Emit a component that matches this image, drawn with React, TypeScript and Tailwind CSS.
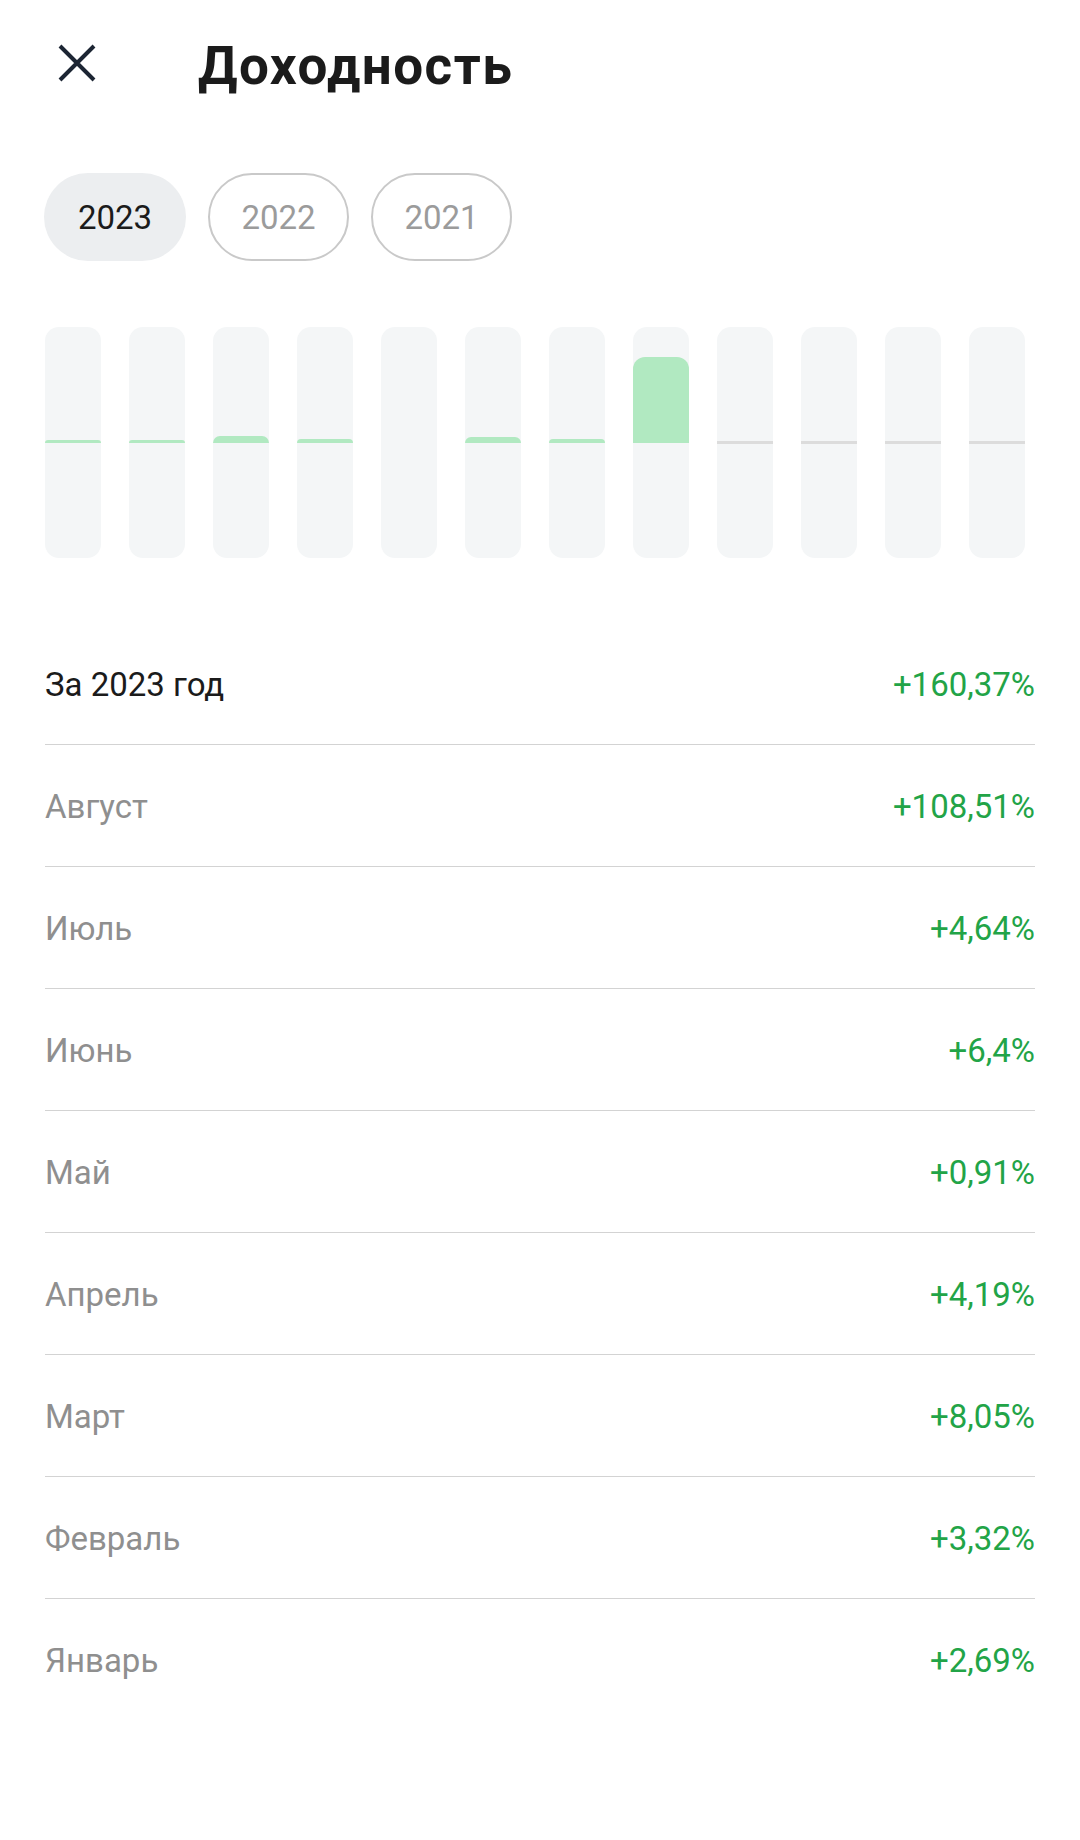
import React from "react";

interface MonthRow {
  label: string;
  value: string;
}

const years = ["2023", "2022", "2021"];

// returns in % for each month of the selected year, null = no data yet
const monthly: (number | null)[] = [2.69, 3.32, 8.05, 4.19, 0.91, 6.4, 4.64, 108.51, null, null, null, null];

const rows: MonthRow[] = [
  { label: "Август", value: "+108,51%" },
  { label: "Июль", value: "+4,64%" },
  { label: "Июнь", value: "+6,4%" },
  { label: "Май", value: "+0,91%" },
  { label: "Апрель", value: "+4,19%" },
  { label: "Март", value: "+8,05%" },
  { label: "Февраль", value: "+3,32%" },
  { label: "Январь", value: "+2,69%" },
];

const CloseIcon = () => (
  <svg width="38" height="38" viewBox="0 0 38 38" fill="none">
    <path d="M2 2L36 36M36 2L2 36" stroke="#1c2533" strokeWidth="4" />
  </svg>
);

const Bar: React.FC<{ value: number | null }> = ({ value }) => {
  const px = value === null ? 0 : value * 0.79;
  return (
    <div className="flex h-[231px] w-[56px] flex-col overflow-hidden rounded-[14px] bg-[#f4f6f7]">
      <div className="flex flex-1 flex-col justify-end">
        {value !== null && px >= 1.5 && (
          <div className="w-full rounded-t-[12px] bg-[#b1e9c1]" style={{ height: `${px}px` }} />
        )}
      </div>
      <div className="flex flex-1 flex-col">
        {value === null && <div className="-mt-[2px] h-[3px] w-full bg-[#dcdcdc]" />}
      </div>
    </div>
  );
};

const App: React.FC = () => {
  return (
    <div className="min-h-[1840px] w-[1080px] bg-white font-['Roboto',sans-serif]">
      <header className="flex h-[126px] items-center pl-[58px]">
        <CloseIcon />
        <h1 className="ml-[102px] mt-[8px] text-[53px] font-bold tracking-[1.5px] text-[#1b1b1b]">
          Доходность
        </h1>
      </header>

      <div className="mt-[47px] flex gap-[22px] pl-[44px]">
        {years.map((y, i) => (
          <button
            key={y}
            className={
              i === 0
                ? "flex h-[88px] w-[142px] items-center justify-center rounded-full bg-[#eceef0] pt-[2px] text-[33px] text-[#1b1b1b]"
                : "flex h-[88px] w-[141px] items-center justify-center rounded-full border-2 border-[#c9c9c9] pt-[2px] text-[33px] text-[#9b9b9b]"
            }
          >
            {y}
          </button>
        ))}
      </div>

      <div className="mt-[66px] flex gap-[28px] pl-[45px]">
        {monthly.map((v, i) => (
          <Bar key={i} value={v} />
        ))}
      </div>

      <div className="mx-[45px] mt-[65px]">
        <div className="flex h-[122px] items-center justify-between border-b border-[#d3d3d3] pt-[2px] text-[33px]">
          <span className="text-[#1b1b1b]">За 2023 год</span>
          <span className="text-[#22a447]">+160,37%</span>
        </div>
        {rows.map((r, i) => (
          <div
            key={r.label}
            className={
              i === rows.length - 1
                ? "flex h-[122px] items-center justify-between pt-[2px] text-[33px]"
                : "flex h-[122px] items-center justify-between border-b border-[#d3d3d3] pt-[2px] text-[33px]"
            }
          >
            <span className="text-[#8f8f8f]">{r.label}</span>
            <span className="text-[#22a447]">{r.value}</span>
          </div>
        ))}
      </div>
    </div>
  );
};

export default App;
